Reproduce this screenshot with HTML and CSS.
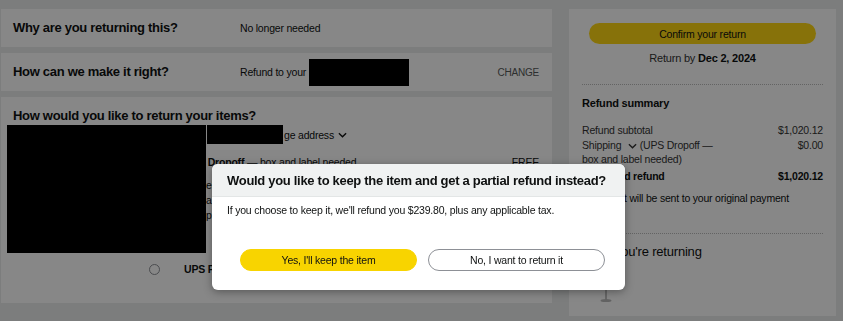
FILE: index.html
```html
<!DOCTYPE html>
<html lang="en">
<head>
<meta charset="utf-8">
<title>Return items</title>
<link rel="stylesheet" href="styles.css">
</head>
<body>
<div class="page">
  <div class="main">
    <section class="card row-card">
      <h2 class="q">Why are you returning this?</h2>
      <span class="ans">No longer needed</span>
    </section>
    <section class="card row-card">
      <h2 class="q">How can we make it right?</h2>
      <span class="ans">Refund to your</span>
      <span class="redact redact-pay"></span>
      <span class="change">CHANGE</span>
    </section>
    <section class="card method">
      <h2 class="q q-method">How would you like to return your items?</h2>
      <div class="addr">
        <span class="redact redact-addr"></span>
        <span>ge address</span>
        <svg class="chev" viewBox="0 0 10 6" width="9" height="6"><path d="M1 1l4 4 4-4" fill="none" stroke="currentColor" stroke-width="1.5"/></svg>
      </div>
      <div class="option">
        <span class="radio"></span>
        <span class="opt-label"><b>UPS Dropoff</b> — box and label needed</span>
        <span class="free">FREE</span>
      </div>
      <p class="opt-desc">eligible items can be dropped off at any location; the UPS Store will pack and ship them for you. a QR code will be emailed to you and the store prints the label.</p>
      <div class="option opt2">
        <span class="radio"></span>
        <span class="opt-label"><b>UPS Pickup</b></span>
      </div>
      <div class="redact redact-item"></div>
    </section>
  </div>
  <aside class="card summary">
    <button class="confirm">Confirm your return</button>
    <p class="return-by">Return by <b>Dec 2, 2024</b></p>
    <hr class="sep">
    <h4 class="sum-title">Refund summary</h4>
    <div class="sum-rows">
      <div class="sum-row"><span>Refund subtotal</span><span>$1,020.12</span></div>
      <div class="sum-row"><span class="ship">Shipping <svg class="chev" viewBox="0 0 10 6" width="9" height="6"><path d="M1 1l4 4 4-4" fill="none" stroke="currentColor" stroke-width="1.5"/></svg> (UPS Dropoff — box and label needed)</span><span>$0.00</span></div>
      <div class="sum-row total"><span>Estimated refund</span><span>$1,020.12</span></div>
    </div>
    <p class="note">The credit will be sent to your original payment method.</p>
    <hr class="sep sep2">
    <h3 class="returning">What you're returning</h3>
    <svg class="thumb" viewBox="0 0 14 20" width="14" height="20"><path d="M7 1v14" stroke="#999" stroke-width="1.2"/><ellipse cx="7" cy="15.5" rx="5.5" ry="1.6" fill="#bbb"/></svg>
  </aside>
</div>
<div class="overlay"></div>
<div class="modal">
  <div class="modal-head">
    <h3>Would you like to keep the item and get a partial refund instead?</h3>
  </div>
  <div class="modal-body">
    <p>If you choose to keep it, we'll refund you $239.80, plus any applicable tax.</p>
    <div class="modal-actions">
      <button class="btn btn-yes">Yes, I'll keep the item</button>
      <button class="btn btn-no">No, I want to return it</button>
    </div>
  </div>
</div>
</body>
</html>
```

FILE: styles.css
```css
* { box-sizing: border-box; }
html, body { margin: 0; padding: 0; }
body {
  width: 843px;
  height: 321px;
  overflow: hidden;
  background: #eaeded;
  font-family: "Liberation Sans", Arial, sans-serif;
  font-size: 10.5px;
  letter-spacing: -0.2px;
  color: #0f1111;
}
.page {
  display: flex;
  gap: 17px;
  padding: 9px 7px 0 1px;
}
.main {
  width: 551px;
  display: flex;
  flex-direction: column;
  gap: 6px;
}
.card {
  background: #ffffff;
}
.q {
  margin: 0;
  font-size: 13px;
  font-weight: bold;
  letter-spacing: -0.3px;
  line-height: 16px;
}
.row-card {
  height: 38px;
  display: flex;
  align-items: center;
  padding: 0 13px 0 12px;
}
.row-card .q { width: 227px; flex: none; }
.ans { line-height: 14px; }
.redact { background: #000; display: inline-block; }
.redact-pay { width: 100px; height: 27px; margin-left: 3px; }
.change {
  margin-left: auto;
  font-size: 10px;
  color: #565959;
}
.method {
  position: relative;
  height: 206px;
  padding-top: 11px;
}
.q-method { padding-left: 12px; }
.addr {
  display: flex;
  align-items: center;
  height: 19px;
  margin-top: 1px;
  padding-left: 206px;
}
.redact-addr { width: 76px; height: 19px; margin-right: 1px; }
.chev { margin-left: 4px; vertical-align: middle; }
.option {
  display: flex;
  align-items: center;
  height: 14px;
  margin-top: 11px;
  padding-left: 148px;
  padding-right: 13px;
}
.radio {
  width: 11px;
  height: 11px;
  border: 1px solid #8d9096;
  border-radius: 50%;
  background: #fff;
  flex: none;
}
.opt-label { margin-left: 24px; }
.free { margin-left: auto; }
.opt-desc {
  margin: 9px 0 0;
  padding-left: 205px;
  width: 540px;
  height: 60px;
  line-height: 15px;
}
.opt2 { margin-top: 24px; }
.redact-item {
  position: absolute;
  left: 6px;
  top: 28px;
  width: 199px;
  height: 128px;
}

.summary {
  width: 267px;
  height: 307px;
  padding: 14px 13px 0;
}
.confirm {
  display: block;
  width: 227px;
  height: 21px;
  margin: 0 7px;
  border: 0;
  border-radius: 11px;
  background: #ffd814;
  font: inherit;
  letter-spacing: -0.2px;
  color: #0f1111;
}
.return-by {
  margin: 7px 0 0;
  text-align: center;
  line-height: 14px;
  font-size: 11px;
  color: #333;
}
.return-by b { color: #0f1111; }
.sep {
  margin: 19px 0 0;
  border: 0;
  border-top: 1px dotted #bbbbbb;
  height: 0;
}
.sum-title {
  margin: 11px 0 0;
  font-size: 11px;
  line-height: 14px;
  font-weight: bold;
}
.sum-rows { margin-top: 13px; }
.sum-row {
  display: flex;
  justify-content: space-between;
  align-items: flex-start;
  line-height: 14.5px;
  color: #333;
}
.ship { width: 135px; }
.total {
  margin-top: 2px;
  font-weight: bold;
  color: #0f1111;
}
.note {
  margin: 8px 0 0;
  line-height: 14px;
  color: #0f1111;
}
.sep2 { margin-top: 14px; }
.returning {
  margin: 10px 0 0;
  font-size: 13px;
  line-height: 16px;
  font-weight: normal;
}
.thumb { display: block; margin: 25px 0 0 17px; }

.overlay {
  position: fixed;
  inset: 0;
  background: rgba(0, 0, 0, 0.47);
}
.modal {
  position: absolute;
  left: 212px;
  top: 164px;
  width: 413px;
  height: 126px;
  background: #fff;
  border-radius: 6px;
  overflow: hidden;
  box-shadow: 0 2px 8px rgba(0, 0, 0, 0.35);
}
.modal-head {
  height: 33px;
  display: flex;
  align-items: center;
  padding-left: 15px;
  background: #f0f2f2;
  border-bottom: 1px solid #e3e6e6;
}
.modal-head h3 {
  margin: 0;
  font-size: 13px;
  font-weight: bold;
  letter-spacing: -0.3px;
}
.modal-body { padding: 6px 20px 0 15px; }
.modal-body p { margin: 0; line-height: 14px; }
.modal-actions {
  display: flex;
  gap: 11px;
  margin-top: 32px;
  padding-left: 13px;
}
.btn {
  width: 177px;
  height: 22px;
  border-radius: 12px;
  font: inherit;
  letter-spacing: -0.2px;
  color: #0f1111;
}
.btn-yes { background: #f8d400; border: 1px solid #f8d400; }
.btn-no { background: #fff; border: 1px solid #8d9096; }
```
